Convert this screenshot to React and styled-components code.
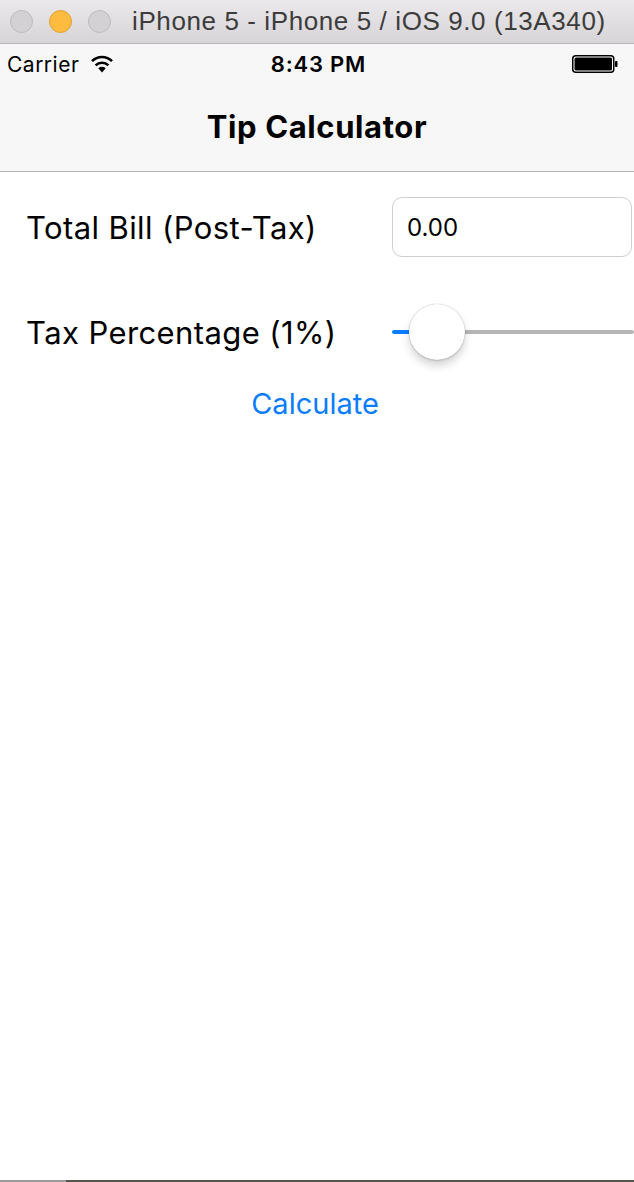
import React from "react";
import styled, { createGlobalStyle } from "styled-components";

const GlobalStyle = createGlobalStyle`
  html, body {
    margin: 0;
    padding: 0;
    background: #ffffff;
  }
  body {
    font-family: "Inter", "Roboto", "Liberation Sans", sans-serif;
  }
`;

const Window = styled.div`
  display: flex;
  flex-direction: column;
  height: 100vh;
  width: 100%;
  overflow: hidden;
  background: #ffffff;
`;

const TitleBar = styled.div`
  display: flex;
  align-items: center;
  height: 43px;
  padding-left: 10px;
  background: linear-gradient(#ebe9eb, #d6d4d6);
  border-bottom: 1px solid #b9b7b9;
  flex-shrink: 0;
`;

const Lights = styled.div`
  display: flex;
  gap: 16px;
  margin-right: 21px;
`;

const Light = styled.span`
  width: 23px;
  height: 23px;
  border-radius: 50%;
  box-sizing: border-box;
  background: ${(p) => (p.$active ? "#fdbc40" : "#d3d1d3")};
  border: 1px solid ${(p) => (p.$active ? "#e0a131" : "#bcbabc")};
`;

const WindowTitle = styled.span`
  font-family: "Liberation Sans", "Arial", sans-serif;
  font-size: 26px;
  color: #3c3c3c;
  letter-spacing: 0.6px;
`;

const Chrome = styled.div`
  background: #f7f7f7;
  border-bottom: 1px solid #b2b2b2;
  flex-shrink: 0;
`;

const StatusBar = styled.div`
  display: grid;
  grid-template-columns: 1fr auto 1fr;
  align-items: center;
  height: 40px;
  padding: 0 16px 0 7px;
  font-size: 21px;
  letter-spacing: 0.5px;
  color: #000;
`;

const Carrier = styled.div`
  display: flex;
  align-items: center;
  gap: 11px;
`;

const Time = styled.div`
  padding-left: 12px;
  font-size: 22px;
  font-weight: 600;
  letter-spacing: 0.8px;
`;

const Battery = styled.div`
  justify-self: end;
  display: flex;
  align-items: center;
`;

const NavBar = styled.div`
  height: 87px;
  display: flex;
  align-items: center;
  justify-content: center;
  padding-bottom: 2px;
  box-sizing: border-box;
  font-size: 31px;
  font-weight: 700;
  letter-spacing: 0.6px;
  color: #000;
`;

const Content = styled.div`
  flex: 1;
  display: flex;
  flex-direction: column;
  padding: 25px 0 0 26px;
`;

const Row = styled.div`
  display: grid;
  grid-template-columns: 366px 1fr;
  align-items: center;
  height: ${(p) => p.$h}px;
  margin-bottom: ${(p) => p.$gap}px;
`;

const Label = styled.span`
  font-size: 31px;
  color: #000;
  letter-spacing: 0.4px;
`;

const Input = styled.input`
  box-sizing: border-box;
  width: 240px;
  height: 60px;
  border: 1px solid #cfcfcf;
  border-radius: 10px;
  padding: 0 14px;
  font-family: inherit;
  font-size: 24px;
  color: #000;
  outline: none;
  background: #fff;
`;

const Slider = styled.div`
  position: relative;
  height: 56px;
  display: flex;
  align-items: center;
`;

const Track = styled.div`
  flex: 1;
  height: 4px;
  border-radius: 2px;
  background: linear-gradient(
    to right,
    #0a7cff 0,
    #0a7cff 20px,
    #b6b6b6 20px
  );
`;

const Thumb = styled.div`
  position: absolute;
  left: 17px;
  top: 0;
  width: 56px;
  height: 56px;
  border-radius: 50%;
  background: #fff;
  box-shadow: 0 0 1px rgba(0, 0, 0, 0.35), 0 6px 8px rgba(0, 0, 0, 0.16),
    0 1px 2px rgba(0, 0, 0, 0.12);
`;

const ActionButton = styled.button`
  align-self: center;
  margin-left: -30px;
  background: none;
  border: none;
  padding: 0;
  font-family: inherit;
  font-size: 29px;
  color: #0a7cff;
  letter-spacing: 0;
  cursor: pointer;
`;

const BottomEdge = styled.div`
  display: flex;
  height: 2px;
  flex-shrink: 0;
`;

const EdgePiece = styled.div`
  width: ${(p) => p.$w};
  flex: ${(p) => (p.$w ? "none" : 1)};
  background: ${(p) => p.$c};
`;

const Wifi = () => (
  <svg width="24" height="18" viewBox="0 0 24 18">
    <path d="M12 17.5 L8.3 13.3 A5.4 5.4 0 0 1 15.7 13.3 Z" fill="#000" />
    <path
      d="M5.6 10.4 A9 9 0 0 1 18.4 10.4"
      stroke="#000"
      strokeWidth="2.6"
      fill="none"
    />
    <path
      d="M2 6.2 A14 14 0 0 1 22 6.2"
      stroke="#000"
      strokeWidth="2.6"
      fill="none"
    />
  </svg>
);

const BatteryIcon = () => (
  <svg width="46" height="18" viewBox="0 0 46 18">
    <rect
      x="0.75"
      y="0.75"
      width="41"
      height="16.5"
      rx="3"
      fill="#fff"
      stroke="#000"
      strokeWidth="1.5"
    />
    <rect x="2.5" y="2.5" width="37.5" height="13" rx="1.5" fill="#000" />
    <rect x="43" y="6" width="2.5" height="6" rx="1" fill="#000" />
  </svg>
);

const App = () => {
  return (
    <Window>
      <GlobalStyle />
      <TitleBar>
        <Lights>
          <Light />
          <Light $active />
          <Light />
        </Lights>
        <WindowTitle>iPhone 5 - iPhone 5 / iOS 9.0 (13A340)</WindowTitle>
      </TitleBar>
      <Chrome>
        <StatusBar>
          <Carrier>
            Carrier <Wifi />
          </Carrier>
          <Time>8:43 PM</Time>
          <Battery>
            <BatteryIcon />
          </Battery>
        </StatusBar>
        <NavBar>Tip Calculator</NavBar>
      </Chrome>
      <Content>
        <Row $h={60} $gap={47}>
          <Label>Total Bill (Post-Tax)</Label>
          <Input defaultValue="0.00" />
        </Row>
        <Row $h={56} $gap={26}>
          <Label>Tax Percentage (1%)</Label>
          <Slider>
            <Track />
            <Thumb />
          </Slider>
        </Row>
        <ActionButton>Calculate</ActionButton>
      </Content>
      <BottomEdge>
        <EdgePiece $w="66px" $c="#9a9a9a" />
        <EdgePiece $c="#55574a" />
      </BottomEdge>
    </Window>
  );
};

export default App;
